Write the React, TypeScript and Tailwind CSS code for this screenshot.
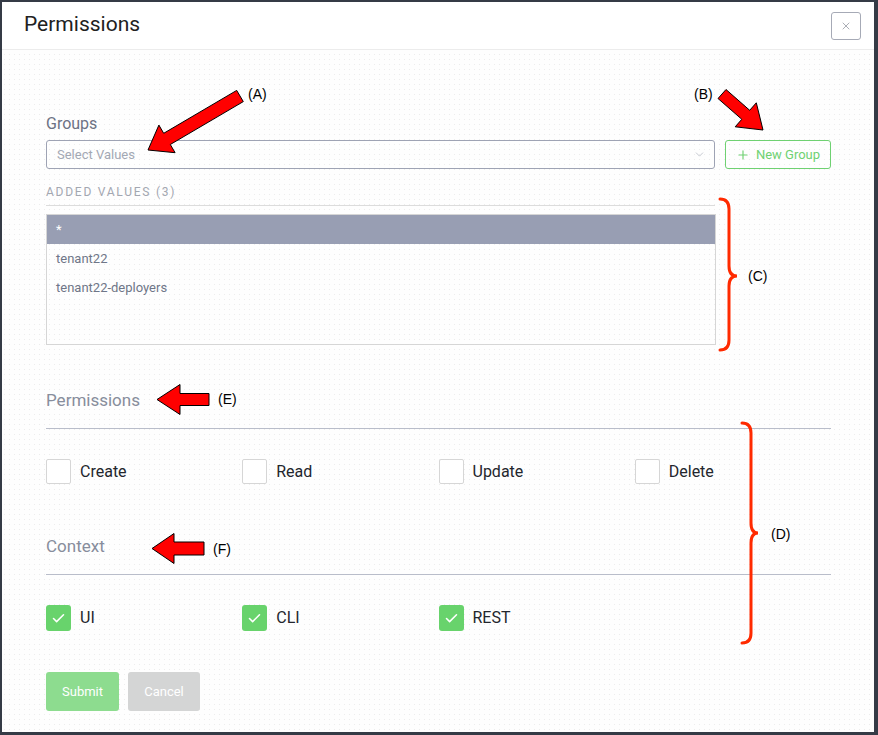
import React from 'react';
import { Check, ChevronDown, Plus, X } from 'lucide-react';

type Pt = [number, number];

// builds an outlined arrow polygon from tail to tip
const arrowPoints = (tail: Pt, tip: Pt, shaft: number, head: number, headLen: number) => {
  const dx = tip[0] - tail[0];
  const dy = tip[1] - tail[1];
  const len = Math.hypot(dx, dy);
  const ux = dx / len;
  const uy = dy / len;
  const nx = -uy;
  const ny = ux;
  const bx = tip[0] - ux * headLen;
  const by = tip[1] - uy * headLen;
  const pts: Pt[] = [
    [tail[0] + nx * shaft, tail[1] + ny * shaft],
    [bx + nx * shaft, by + ny * shaft],
    [bx + nx * head, by + ny * head],
    tip,
    [bx - nx * head, by - ny * head],
    [bx - nx * shaft, by - ny * shaft],
    [tail[0] - nx * shaft, tail[1] - ny * shaft],
  ];
  return pts.map((p) => `${p[0].toFixed(1)},${p[1].toFixed(1)}`).join(' ');
};

const bracePath = (x0: number, x1: number, xm: number, top: number, mid: number, bot: number) =>
  `M ${x0} ${top} Q ${x1} ${top} ${x1} ${top + 10} L ${x1} ${mid - 10} Q ${x1} ${mid} ${xm} ${mid} Q ${x1} ${mid} ${x1} ${mid + 10} L ${x1} ${bot - 10} Q ${x1} ${bot} ${x0} ${bot}`;

const Annotations: React.FC = () => {
  const labels: { t: string; x: number; y: number }[] = [
    { t: '(A)', x: 248, y: 94 },
    { t: '(B)', x: 694, y: 94 },
    { t: '(C)', x: 748, y: 276 },
    { t: '(D)', x: 771, y: 534 },
    { t: '(E)', x: 218, y: 399 },
    { t: '(F)', x: 213, y: 549 },
  ];
  return (
    <svg
      className="absolute left-0 top-0 pointer-events-none"
      width={878}
      height={735}
      viewBox="0 0 878 735"
    >
      <g fill="#ff0000" stroke="#000" strokeWidth={1} strokeLinejoin="miter">
        <polygon points={arrowPoints([240, 96], [148, 150], 6.5, 16, 22)} />
        <polygon points={arrowPoints([722, 94], [763, 130], 6, 16, 23)} />
        <polygon points={arrowPoints([209, 399.5], [157, 399.5], 6, 15, 23)} />
        <polygon points={arrowPoints([204, 548.5], [152, 548.5], 6.5, 15, 22)} />
      </g>
      <g fill="none" stroke="#ff2a00" strokeWidth={3} strokeLinecap="round">
        <path d={bracePath(720, 729, 737, 199, 276, 350)} />
        <path d={bracePath(742, 751, 758, 423, 533, 643)} />
      </g>
      <g fill="#000" fontFamily="'Liberation Sans', Arial, sans-serif" fontSize={14}>
        {labels.map((l) => (
          <text key={l.t} x={l.x} y={l.y + 5}>
            {l.t}
          </text>
        ))}
      </g>
    </svg>
  );
};

const Box: React.FC<{ checked?: boolean; label: string }> = ({ checked, label }) => (
  <div className="flex items-center gap-[9px]">
    {checked ? (
      <span className="w-[25px] h-[26px] rounded-[3px] bg-[#68d36c] flex items-center justify-center">
        <Check size={15} strokeWidth={2.5} color="#fff" />
      </span>
    ) : (
      <span className="w-[25px] h-[25px] rounded-[2px] border border-[#d6d6d6] bg-white" />
    )}
    <span className="text-[16px] leading-[20px] text-[#23262d]">{label}</span>
  </div>
);

export default function App() {
  const groups = ['*', 'tenant22', 'tenant22-deployers'];

  return (
    <div className="relative w-[878px] h-[735px] font-['Roboto',sans-serif]">
      <div className="w-full h-full flex flex-col border-l-2 border-t-2 border-r-[4px] border-b-[3px] border-[#353b46] bg-[#fefefe] bg-[radial-gradient(circle,#ededed_0.6px,transparent_0.7px)] bg-[length:5px_5px]">
        <div className="h-[48px] bg-white border-b border-[#ececec] flex items-center justify-between pl-[22px] pr-[13px]">
          <h1 className="text-[21px] text-[#212121] leading-none -mt-[3px]">Permissions</h1>
          <button className="w-[30px] h-[28px] rounded-[3px] border border-[#a6aab6] bg-white flex items-center justify-center">
            <X size={12} strokeWidth={1.5} color="#8f939d" />
          </button>
        </div>

        <div className="pl-[44px] pr-[43px] pt-[64px]">
          <div className="text-[16px] leading-[20px] text-[#6c7284]">Groups</div>
          <div className="flex gap-[10px] mt-[6px]">
            <div className="w-[669px] h-[29px] rounded-[3px] border border-[#9ea3b4] bg-transparent flex items-center justify-between pl-[10px] pr-[8px]">
              <span className="text-[13px] text-[#a3a8b4]">Select Values</span>
              <ChevronDown size={13} strokeWidth={1.5} color="#b9bdc6" />
            </div>
            <button className="w-[106px] h-[29px] rounded-[3px] border border-[#6fd172] flex items-center justify-center gap-[6px] text-[13px] text-[#6fd172]">
              <Plus size={14} strokeWidth={2} />
              New Group
            </button>
          </div>

          <div className="w-[669px] mt-[16px] pb-[6px] border-b border-[#dcdcdc] text-[12px] leading-[14px] tracking-[1.75px] text-[#a3a7b1]">
            ADDED VALUES (3)
          </div>
          <div className="w-[670px] h-[131px] mt-[8px] border border-[#d6d6d6]">
            {groups.map((g, i) => (
              <div
                key={g}
                className={
                  i === 0
                    ? 'h-[29px] px-[9px] flex items-center bg-[#989eb3] text-white text-[13px]'
                    : 'h-[29px] px-[9px] flex items-center text-[#6f7688] text-[13px]'
                }
              >
                {g}
              </div>
            ))}
          </div>

          <div className="mt-[43px] pb-[16px] border-b border-[#b9bdca] text-[17px] leading-[24px] text-[#878d9c]">
            Permissions
          </div>
          <div className="grid grid-cols-4 mt-[30px]">
            <Box label="Create" />
            <Box label="Read" />
            <Box label="Update" />
            <Box label="Delete" />
          </div>

          <div className="mt-[50px] pb-[16px] border-b border-[#b9bdca] text-[17px] leading-[24px] text-[#878d9c]">
            Context
          </div>
          <div className="grid grid-cols-4 mt-[30px]">
            <Box checked label="UI" />
            <Box checked label="CLI" />
            <Box checked label="REST" />
          </div>

          <div className="flex gap-[9px] mt-[41px]">
            <button className="w-[73px] h-[39px] rounded-[3px] bg-[#8ddc8f] text-white text-[13px]">Submit</button>
            <button className="w-[72px] h-[39px] rounded-[3px] bg-[#d4d5d5] text-white text-[13px]">Cancel</button>
          </div>
        </div>
      </div>
      <Annotations />
    </div>
  );
}
